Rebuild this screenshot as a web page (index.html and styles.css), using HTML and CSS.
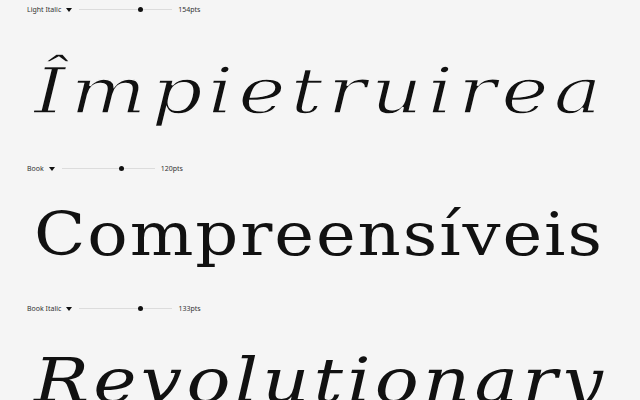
FILE: index.html
```html
<!DOCTYPE html>
<html>
<head>
<meta charset="utf-8">
<link rel="stylesheet" href="styles.css">
</head>
<body>
<div class="page">
  <section class="sample sample-one">
    <div class="controls">
      <span class="label">Light Italic</span>
      <span class="caret"></span>
      <span class="track"><span class="thumb" style="left:66%"></span></span>
      <span class="value">154pts</span>
    </div>
    <div class="specimen specimen-light-italic"><span class="word">Împietruirea</span></div>
  </section>
  <section class="sample sample-two">
    <div class="controls">
      <span class="label">Book</span>
      <span class="caret"></span>
      <span class="track"><span class="thumb" style="left:64%"></span></span>
      <span class="value">120pts</span>
    </div>
    <div class="specimen specimen-book"><span class="word">Compreensíveis</span></div>
  </section>
  <section class="sample sample-three">
    <div class="controls">
      <span class="label">Book Italic</span>
      <span class="caret"></span>
      <span class="track"><span class="thumb" style="left:66%"></span></span>
      <span class="value">133pts</span>
    </div>
    <div class="specimen specimen-book-italic"><span class="word">Revolutionary</span></div>
  </section>
</div>
</body>
</html>
```
FILE: styles.css
```css
html, body {
  margin: 0;
  padding: 0;
  background: #f5f5f5;
}
.page {
  width: 640px;
  height: 400px;
  overflow: hidden;
  display: flex;
  flex-direction: column;
}
.sample {
  display: flex;
  flex-direction: column;
  flex: none;
}
.sample-one { height: 159px; }
.sample-two { height: 145px; }
.sample-three { height: 96px; overflow: hidden; }

.controls {
  height: 19px;
  display: flex;
  align-items: center;
  padding-left: 27px;
  font-family: "Noto Sans", "Open Sans", sans-serif;
  font-size: 7px;
  color: #333;
}
.caret {
  width: 0;
  height: 0;
  border-left: 3px solid transparent;
  border-right: 3px solid transparent;
  border-top: 4px solid #111;
  margin-left: 5px;
}
.track {
  position: relative;
  width: 93px;
  height: 1px;
  background: #dcdcdc;
  margin-left: 7px;
}
.thumb {
  position: absolute;
  top: -2px;
  width: 5px;
  height: 5px;
  margin-left: -2.5px;
  border-radius: 50%;
  background: #111;
}
.value {
  margin-left: 6px;
}

.specimen {
  font-family: "DejaVu Serif", serif;
  color: #111;
  line-height: 1;
  padding-left: 34px;
  white-space: nowrap;
}
.word {
  display: inline-block;
  transform-origin: left center;
}
.specimen-light-italic {
  font-style: italic;
  font-size: 64px;
  margin-top: 40px;
  letter-spacing: 4px;
  -webkit-text-stroke: 1.4px #f5f5f5;
}
.specimen-light-italic .word { transform: scaleX(1.25); }
.specimen-book {
  font-size: 60px;
  margin-top: 26px;
  letter-spacing: 1.7px;
}
.specimen-book .word { transform: scaleX(1.12); }
.specimen-book-italic {
  font-style: italic;
  font-size: 61px;
  margin-top: 37px;
  letter-spacing: 3.5px;
}
.specimen-book-italic .word { transform: scaleX(1.2); }
```
